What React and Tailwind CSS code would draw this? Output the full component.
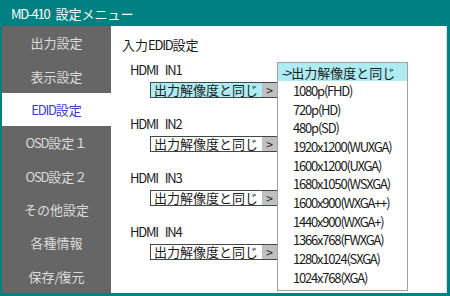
import React from 'react';

const menu = ['出力設定', '表示設定', 'EDID設定', 'OSD設定１', 'OSD設定２', 'その他設定', '各種情報', '保存/復元'];

const resolutions = [
  '1080p(FHD)',
  '720p(HD)',
  '480p(SD)',
  '1920x1200(WUXGA)',
  '1600x1200(UXGA)',
  '1680x1050(WSXGA)',
  '1600x900(WXGA++)',
  '1440x900(WXGA+)',
  '1366x768(FWXGA)',
  '1280x1024(SXGA)',
  '1024x768(XGA)',
];

// 半角部分だけ詰めて表示する
function Mixed({ text }) {
  return text
    .split(/([ -~]+)/)
    .filter(Boolean)
    .map((part, i) =>
      /^[ -~]+$/.test(part) ? (
        <span key={i} className="whitespace-pre tracking-[-1.2px] [word-spacing:5px]">{part}</span>
      ) : (
        <span key={i}>{part}</span>
      )
    );
}

function SelectBox({ active }) {
  return (
    <div className="ml-[28px] mt-[4px] h-[16px] w-[128px] flex border border-[#404848] leading-[14px]">
      <div className={`flex-1 pl-[3px] ${active ? 'bg-[#aeecf4]' : 'bg-white'}`}>出力解像度と同じ</div>
      <div className="w-[15px] bg-[#c0c0c0] flex items-center justify-center text-[12px]">&gt;</div>
    </div>
  );
}

export default function App() {
  return (
    <div className="w-[450px] h-[296px] bg-[#008080] flex flex-col overflow-hidden font-['Noto_Sans_CJK_JP',sans-serif] text-[13px] leading-[17px] text-[#1a1a1a]">
      <div className="h-[26px] shrink-0 flex items-center pl-[11px] text-white">
        <span className="tracking-[-1.2px]">MD-410</span>
        <span className="whitespace-pre"> </span>
        <span className="ml-[3px]">設定メニュー</span>
      </div>

      <div className="flex-1 min-h-0 flex ml-[2px] mr-[3px] mb-[3px]">
        {/* サイドメニュー */}
        <div className="w-[109px] shrink-0 bg-[#666666] grid grid-rows-8">
          {menu.map((m, i) => (
            <div
              key={m}
              className={`flex items-center justify-center ${i === 2 ? 'bg-white text-[#3c3cd0]' : 'text-[#dcdcdc]'}`}
            >
              <Mixed text={m} />
            </div>
          ))}
        </div>

        {/* 入力EDID設定 */}
        <div className="relative flex-1 bg-white border-r border-[#d0e4e4] pt-[10px] pl-[11px]">
          <div>
            <Mixed text="入力EDID設定" />
          </div>
          {['HDMI IN1', 'HDMI IN2', 'HDMI IN3', 'HDMI IN4'].map((name, i) => (
            <div key={name} className={i === 0 ? 'mt-[8px]' : 'mt-[17px]'}>
              <div className="ml-[8px]">
                <Mixed text={name} />
              </div>
              <SelectBox active={i === 0} />
            </div>
          ))}

          {/* ドロップダウン */}
          <div className="absolute left-[166px] top-[36px] w-[131px] bg-white border border-[#a0a0a0] pb-[3px]">
            <div className="h-[18px] flex items-center pl-[4px] bg-[#aeecf4]">
              <Mixed text="->出力解像度と同じ" />
            </div>
            {resolutions.map((r) => (
              <div key={r} className="h-[18.7px] flex items-center pl-[15px]">
                <Mixed text={r} />
              </div>
            ))}
          </div>
        </div>
      </div>
    </div>
  );
}
